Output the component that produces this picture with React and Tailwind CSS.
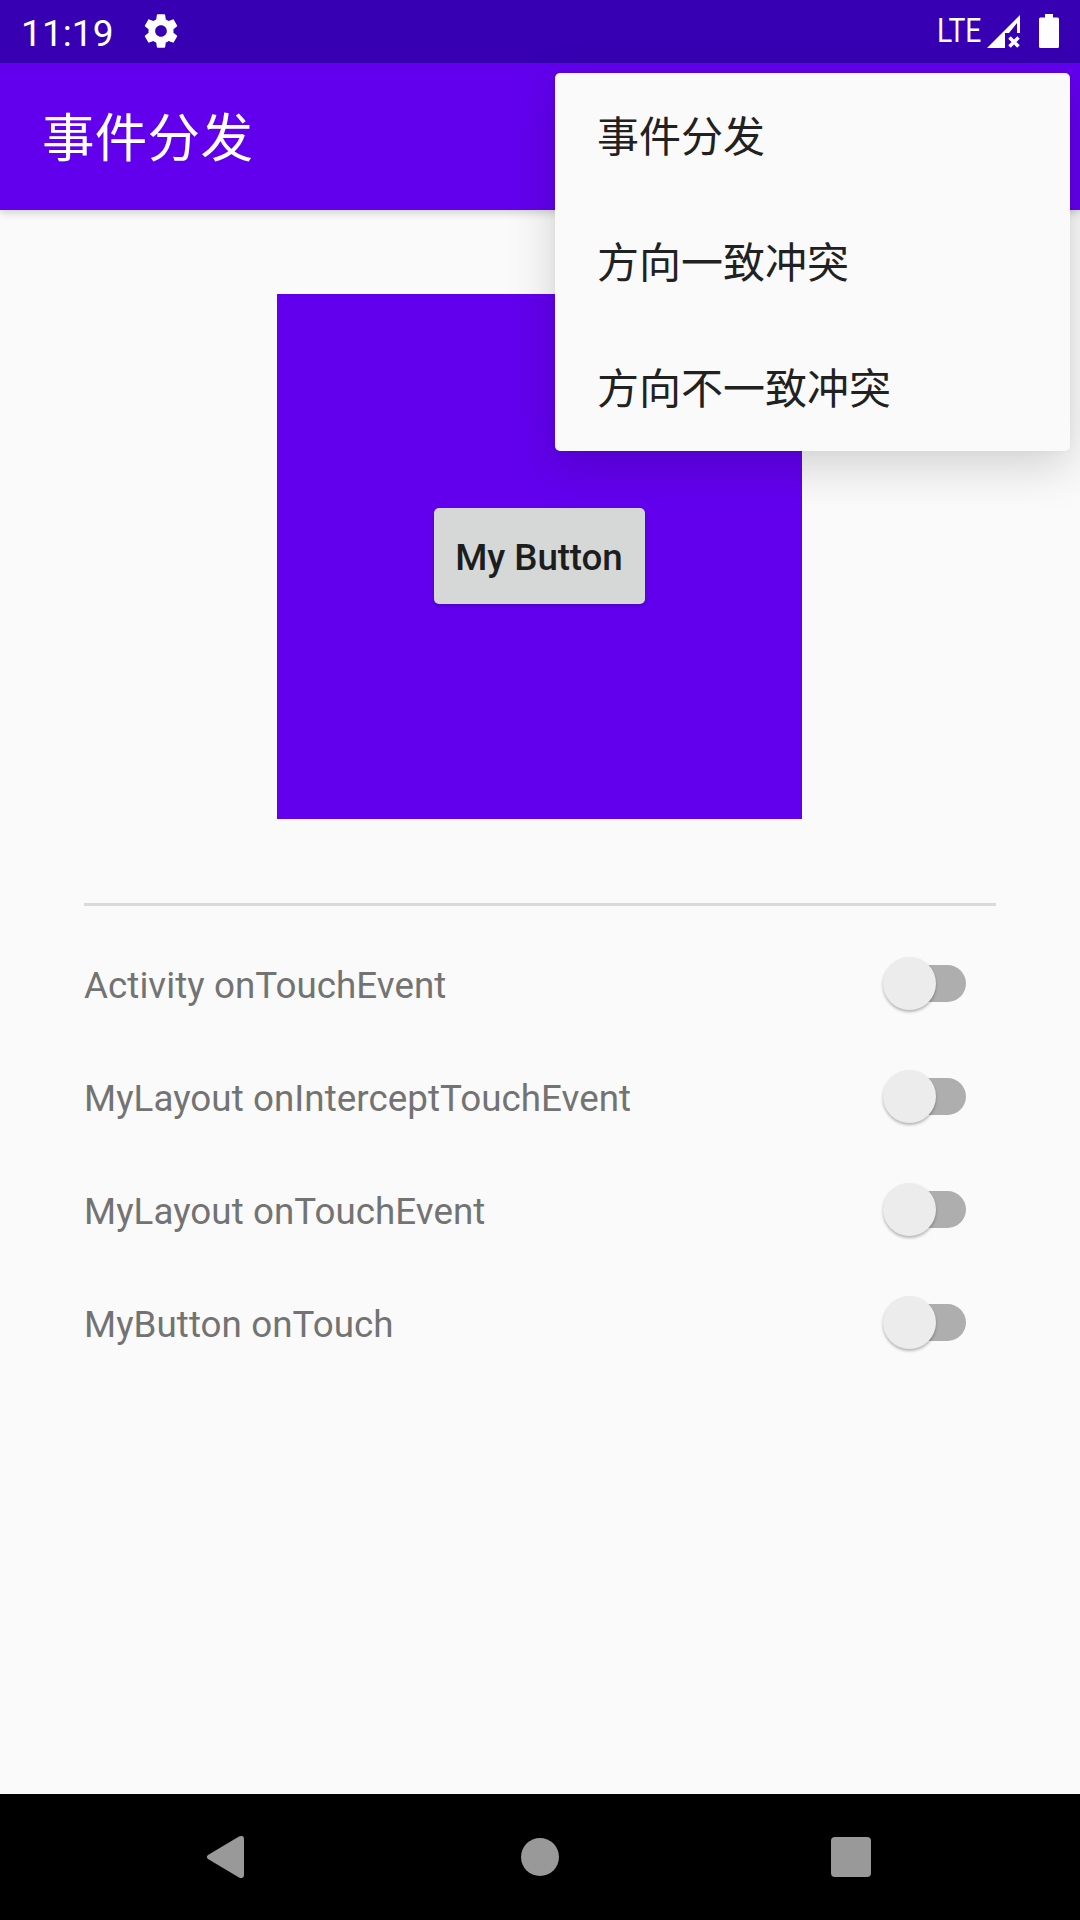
const switches = [
  "Activity onTouchEvent",
  "MyLayout onInterceptTouchEvent",
  "MyLayout onTouchEvent",
  "MyButton onTouch",
];

const menuItems = ["事件分发", "方向一致冲突", "方向不一致冲突"];

function StatusBar() {
  return (
    <div className="flex h-[63px] items-center bg-[#3700b3] pr-[21px] pb-px pl-[21px] text-white">
      <span className="w-[93px] pt-[5px] text-[37px] leading-[44px] tracking-[0.1px] whitespace-nowrap">11:19</span>
      <svg className="ml-[27px] h-10 w-10" viewBox="0 0 24 24" fill="currentColor">
        <path d="M19.43 12.98c.04-.32.07-.64.07-.98s-.03-.66-.07-.98l2.11-1.65c.19-.15.24-.42.12-.64l-2-3.46c-.12-.22-.39-.3-.61-.22l-2.49 1c-.52-.4-1.08-.73-1.69-.98l-.38-2.65C14.46 2.18 14.25 2 14 2h-4c-.25 0-.46.18-.49.42l-.38 2.65c-.61.25-1.17.59-1.69.98l-2.49-1c-.23-.09-.49 0-.61.22l-2 3.46c-.13.22-.07.49.12.64l2.11 1.65c-.04.32-.07.65-.07.98s.03.66.07.98l-2.11 1.65c-.19.15-.24.42-.12.64l2 3.46c.12.22.39.3.61.22l2.49-1c.52.4 1.08.73 1.69.98l.38 2.65c.03.24.24.42.49.42h4c.25 0 .46-.18.49-.42l.38-2.65c.61-.25 1.17-.59 1.69-.98l2.49 1c.23.09.49 0 .61-.22l2-3.46c.12-.22.07-.49-.12-.64l-2.11-1.65zM12 15.5c-1.93 0-3.5-1.57-3.5-3.5s1.57-3.5 3.5-3.5 3.5 1.57 3.5 3.5-1.57 3.5-3.5 3.5z" />
      </svg>
      <div className="ml-auto flex items-center">
        <span className="w-[50px] origin-left scale-x-[0.87] text-[32.5px] leading-[38px] whitespace-nowrap">LTE</span>
        <svg className="h-[33px] w-[34px]" viewBox="0 0 34 33" fill="currentColor">
          <path d="M0 33 L33 0 V18 H30 V8 L22 18 H18 V33 Z" />
          <path d="M22.5 22.5 L31.5 31.5 M31.5 22.5 L22.5 31.5" stroke="currentColor" strokeWidth="3.5" />
        </svg>
        <svg className="ml-[18px] h-[34px] w-5" viewBox="0 0 20 34" fill="currentColor">
          <path d="M6 0 H14 V3.5 H18.5 Q20 3.5 20 5 V32.5 Q20 34 18.5 34 H1.5 Q0 34 0 32.5 V5 Q0 3.5 1.5 3.5 H6 Z" />
        </svg>
      </div>
    </div>
  );
}

function Switch() {
  return (
    <div className="relative h-[53px] w-[83px]">
      <div className="absolute top-[8px] right-0 h-[37px] w-[74px] rounded-full bg-[#aeaeae]" />
      <div className="absolute top-0 left-0 h-[53px] w-[53px] rounded-full bg-[#ececec] shadow-[0_2px_3px_rgba(0,0,0,0.28)]" />
    </div>
  );
}

function NavBar() {
  return (
    <div className="flex h-[126px] items-center bg-black pr-[209px] pl-[206px] text-[#999999]">
      <svg className="h-[42px] w-[38px]" viewBox="0 0 38 42" fill="currentColor">
        <path d="M2 19 L33 0.6 Q38 -1.5 38 3.5 V38.5 Q38 43.5 33 41.4 L2 23 Q-0.4 21 2 19 Z" />
      </svg>
      <div className="ml-[277px] h-[38px] w-[38px] rounded-full bg-[#999999]" />
      <div className="ml-auto h-10 w-10 rounded-[4px] bg-[#999999]" />
    </div>
  );
}

export default function App() {
  return (
    <div className="relative flex h-[1920px] w-[1080px] flex-col overflow-hidden bg-[#fafafa] font-['Roboto','Noto_Sans_CJK_SC',sans-serif]">
      <StatusBar />
      <header className="flex h-[147px] items-center bg-[#6200ee] pt-1 pl-[42px] shadow-[0_3px_8px_rgba(0,0,0,0.17)]">
        <h1 className="text-[52.5px] leading-[62px] tracking-[0.3px] text-white">事件分发</h1>
      </header>
      <main className="flex flex-1 flex-col px-[84px] pt-[84px]">
        <div className="ml-[193px] flex h-[525px] w-[525px] items-center justify-center bg-[#6200ee] pb-[2px]">
          <button className="h-24 w-[211px] rounded-[5px] bg-[#d6d7d7] pt-[5px] pr-px text-[36.75px] font-medium tracking-[-0.1px] whitespace-nowrap text-[#1c1d1d] shadow-[0_2px_4px_rgba(0,0,0,0.18)]">
            My Button
          </button>
        </div>
        <div className="mt-[84px] h-[3px] bg-[#dadada]" />
        <div className="mt-[21px]">
          {switches.map((label) => (
            <div key={label} className="flex h-[113px] items-center justify-between pr-[30px]">
              <span className="pt-[3px] text-[36.75px] leading-[43px] tracking-[0.05px] text-[#737373]">{label}</span>
              <Switch />
            </div>
          ))}
        </div>
      </main>
      <NavBar />
      <div className="absolute top-[73px] left-[555px] w-[515px] rounded-[5px] bg-[#fafafa] shadow-[0_14px_48px_rgba(0,0,0,0.17),0_0_10px_rgba(0,0,0,0.03)]">
        {menuItems.map((item) => (
          <div key={item} className="flex h-[126px] items-center pt-[3px] pl-[42px] text-[42px] leading-[50px] text-[#212121]">
            {item}
          </div>
        ))}
      </div>
    </div>
  );
}
